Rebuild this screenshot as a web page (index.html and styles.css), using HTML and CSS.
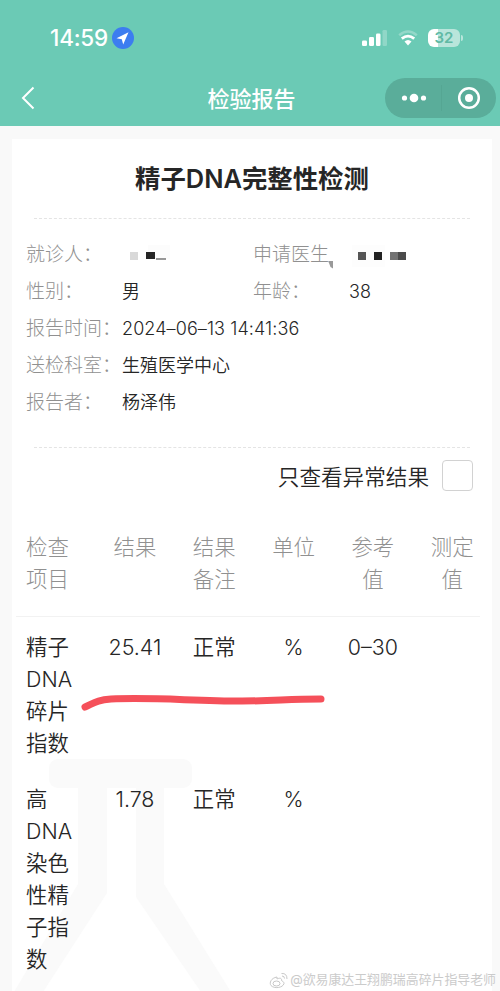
FILE: index.html
```html
<!DOCTYPE html>
<html lang="zh-CN">
<head>
<meta charset="utf-8">
<title>检验报告</title>
<link rel="stylesheet" href="styles.css">
</head>
<body>
<div class="screen">
  <header class="top">
    <div class="status">
      <span class="clock">14:59</span>
      <svg class="loc" width="22" height="22" viewBox="0 0 22 22"><circle cx="11" cy="11" r="11" fill="#3c7df0"/><path d="M16.500 5.200 4.500 11.200l5.300 1.100 1.400 5.200z" fill="#fff"/></svg>
      <svg class="signal" width="26" height="16" viewBox="0 0 26 16" fill="#fff"><rect x="0" y="10.500" width="5" height="5.500" rx="1.300"/><rect x="7" y="7" width="5" height="9" rx="1.300"/><rect x="14" y="3.500" width="4.500" height="12.500" rx="1.300"/><rect x="20.500" y="0" width="4.500" height="16" rx="1.300" opacity=".25"/></svg>
      <svg class="wifi" width="20" height="16" viewBox="0 0 20 16" fill="none"><path d="M1.200 5.200Q10-2.200 18.800 5.200" stroke="#fff" stroke-width="2.600" opacity=".28"/><path d="M3.800 8.700Q10 3.600 16.200 8.700" stroke="#fff" stroke-width="2.800"/><path d="M6.500 11.600Q10 8.600 13.500 11.600L10 15.600z" fill="#fff"/></svg>
      <span class="battery"><span class="cell">32</span><span class="nub"></span></span>
    </div>
    <nav class="nav">
      <svg class="back" width="14" height="24" viewBox="0 0 14 24" fill="none" stroke="#fff" stroke-width="2"><path d="M12.500 1.500 2 12l10.500 10.500"/></svg>
      <h1 class="nav-title">检验报告</h1>
      <div class="capsule">
        <svg width="26" height="10" viewBox="0 0 26 10" fill="#fff"><circle cx="3.500" cy="5" r="2.600"/><circle cx="13" cy="5" r="4.300"/><circle cx="22.500" cy="5" r="2.600"/></svg>
        <span class="split"></span>
        <svg width="24" height="24" viewBox="0 0 24 24"><circle cx="12" cy="12" r="9.800" fill="none" stroke="#fff" stroke-width="2.500"/><circle cx="12" cy="12" r="4" fill="#fff"/></svg>
      </div>
    </nav>
  </header>

  <main class="card">
    <svg class="flask" width="250" height="233" viewBox="0 0 250 233" fill="#fafafa"><rect x="37" y="0" width="143" height="29" rx="9"/><path d="M66 28H95V134L31 233H2L66 125zM124 28H152V125L219 233H189L124 138z"/></svg>
    <h2 class="title">精子DNA完整性检测</h2>
    <dl class="info">
      <dt>就诊人：</dt><dd><svg class="mosaic" width="60" height="20" viewBox="0 0 60 20"><path d="M26 0h22v14H26z" fill="#fcfcfc"/><path d="M8 7h8v8H8z" fill="#d9d9d9"/><path d="M24 7h9v7h-9z" fill="#252525"/><path d="M34 13.500h10v1H34z" fill="#333"/></svg></dd>
      <dt>申请医生</dt><dd><svg class="mosaic" width="66" height="24" viewBox="0 0 66 24"><path d="M3 0h33v22H3z" fill="#fdfdfd"/><path d="M9 7h8v8H9z" fill="#555"/><path d="M25 7h8v8h-8z" fill="#222"/><path d="M41 7h8v8h-8z" fill="#737373"/><path d="M49 7h8v8h-8z" fill="#4b4b4b"/></svg><span class="smudge"></span></dd>
      <dt>性别：</dt><dd>男</dd>
      <dt>年龄：</dt><dd>38</dd>
      <dt>报告时间：</dt><dd class="wide date">2024–06–13 14:41:36</dd>
      <dt>送检科室：</dt><dd class="wide">生殖医学中心</dd>
      <dt>报告者：</dt><dd class="wide">杨泽伟</dd>
    </dl>
    <label class="filter"><span>只查看异常结果</span><span class="box"></span></label>
    <div class="table">
      <div class="row head"><div>检查项目</div><div>结果</div><div>结果备注</div><div>单位</div><div>参考值</div><div>测定值</div></div>
      <div class="row"><div>精子DNA碎片指数</div><div>25.41</div><div>正常</div><div>%</div><div>0–30</div><div></div>
        <svg class="stroke" width="250" height="24" viewBox="0 0 250 24" fill="none" stroke="#f5505a" stroke-width="7" stroke-linecap="round" stroke-linejoin="round"><path d="M8 16C17 12 20 9 34 8C77 6 115 10 165 10C199 10 209 8 244 8"/></svg>
      </div>
      <div class="row"><div>高DNA染色性精子指数</div><div>1.78</div><div>正常</div><div>%</div><div></div><div></div></div>
    </div>
  </main>
  <div class="credit">
    <svg width="20" height="17" viewBox="0 0 20 17" fill="none" stroke="#c8c8c8"><path d="M8 5C2 6 0 11 2 13.500C5 17 14 16 15 11.500C15 9.500 13 9 12.500 8.500C13 5.500 10 6 8 7z"/><ellipse cx="7.500" cy="11.500" rx="3.500" ry="2.500"/><path d="M12.500 1.500Q18 1 18 7M13 4Q15.500 4 15.500 6.500"/></svg>
    <span>@欲易康达王翔鹏瑞高碎片指导老师</span>
  </div>
</div>
</body>
</html>
```
FILE: styles.css
```css
* { box-sizing: border-box; }
body { margin: 0; background: #f9f9f9; color: #262626; font-family: Inter, "Noto Sans CJK SC", sans-serif; font-weight: 350; }
.screen { position: relative; width: 500px; height: 991px; overflow: hidden; }

.top { height: 126px; background: #6bcab5; color: #fff; }
.status { display: flex; align-items: center; height: 70px; padding: 6px 37px 0 50px; }
.clock { width: 62px; font-size: 22.5px; font-weight: 500; line-height: 26px; letter-spacing: -0.2px; }
.loc { margin-right: auto; }
.signal { margin-right: 10px; }
.wifi { margin-right: 10px; }
.battery { display: flex; align-items: center; }
.cell { width: 32px; height: 18px; border-radius: 6px; background: linear-gradient(90deg, #fff 32%, #b9e5db 32%); color: #60b9a4; font-size: 15px; font-weight: 600; line-height: 18px; text-align: center; }
.nub { width: 2px; height: 6px; margin-left: 1px; border-radius: 0 2px 2px 0; background: #b9e5db; }
.nav { display: grid; grid-template-columns: 120px 1fr 120px; align-items: center; height: 56px; }
.back { margin-left: 21px; }
.nav-title { margin: 0; padding: 1px 0 0 3px; font-size: 22px; font-weight: 500; line-height: 30px; text-align: center; }
.capsule { display: flex; align-items: center; justify-content: space-between; width: 111px; height: 40px; margin-left: 4.5px; padding: 0 15px 0 16px; border-radius: 20px; background: #5aad9a; }
.split { width: 1px; height: 26px; background: #55a693; }

.card { position: relative; height: 852px; margin: 13px 8px 0 12px; padding-top: 20px; background: #fff; }
.flask { position: absolute; left: 0; top: 620px; }
.title { margin: 0 22px; height: 60px; border-bottom: 1px dashed #e4e4e4; font-size: 25.4px; font-weight: 600; line-height: 40px; text-align: center; }
.info { display: grid; grid-template-columns: 96px 131px 96px 1fr; grid-auto-rows: 37.1px; height: 229px; margin: 0 22px; padding-top: 16.5px; border-bottom: 1px dashed #e4e4e4; line-height: 37px; }
.info dt { margin-left: -8px; color: #909090; font-size: 19px; font-weight: 300; white-space: nowrap; }
.info dd { position: relative; margin: 0 0 0 -8px; font-size: 18px; white-space: nowrap; }
.info .wide { grid-column: span 3; }
.info .date { letter-spacing: 0.09px; }
.mosaic { display: block; margin-top: 9.5px; }
.smudge { position: absolute; left: -21px; top: 25px; width: 5px; height: 8px; background: #999; clip-path: polygon(0 0, 100% 0, 100% 100%, 50% 80%); }
.filter { display: flex; align-items: center; justify-content: flex-end; gap: 13px; height: 55px; padding-right: 19px; font-size: 21.6px; }
.box { width: 31px; height: 31px; border: 1px solid #d2d2d2; border-radius: 4px; }

.table { margin: 13px 12px 0 4px; font-size: 21.4px; line-height: 32.1px; }
.row { position: relative; display: grid; grid-template-columns: repeat(6, 79.3px); padding-top: 13.5px; height: 152px; }
.row > div { padding: 0 16px; text-align: center; }
.row > div:first-child { padding: 0 25px 0 10px; text-align: left; }
.head { height: 101px; padding-top: 15px; border-bottom: 1px solid #f2f2f2; color: #909090; font-weight: 300; }
.row:not(.head) > div:nth-child(n+2) { margin: 0 -6px; }
.stroke { position: absolute; left: 61px; top: 74px; }

.credit { position: absolute; right: 4px; bottom: 1px; display: flex; align-items: center; gap: 1px; color: #cbcbcb; font-size: 12.9px; font-weight: 400; line-height: 20px; white-space: nowrap; }
```
